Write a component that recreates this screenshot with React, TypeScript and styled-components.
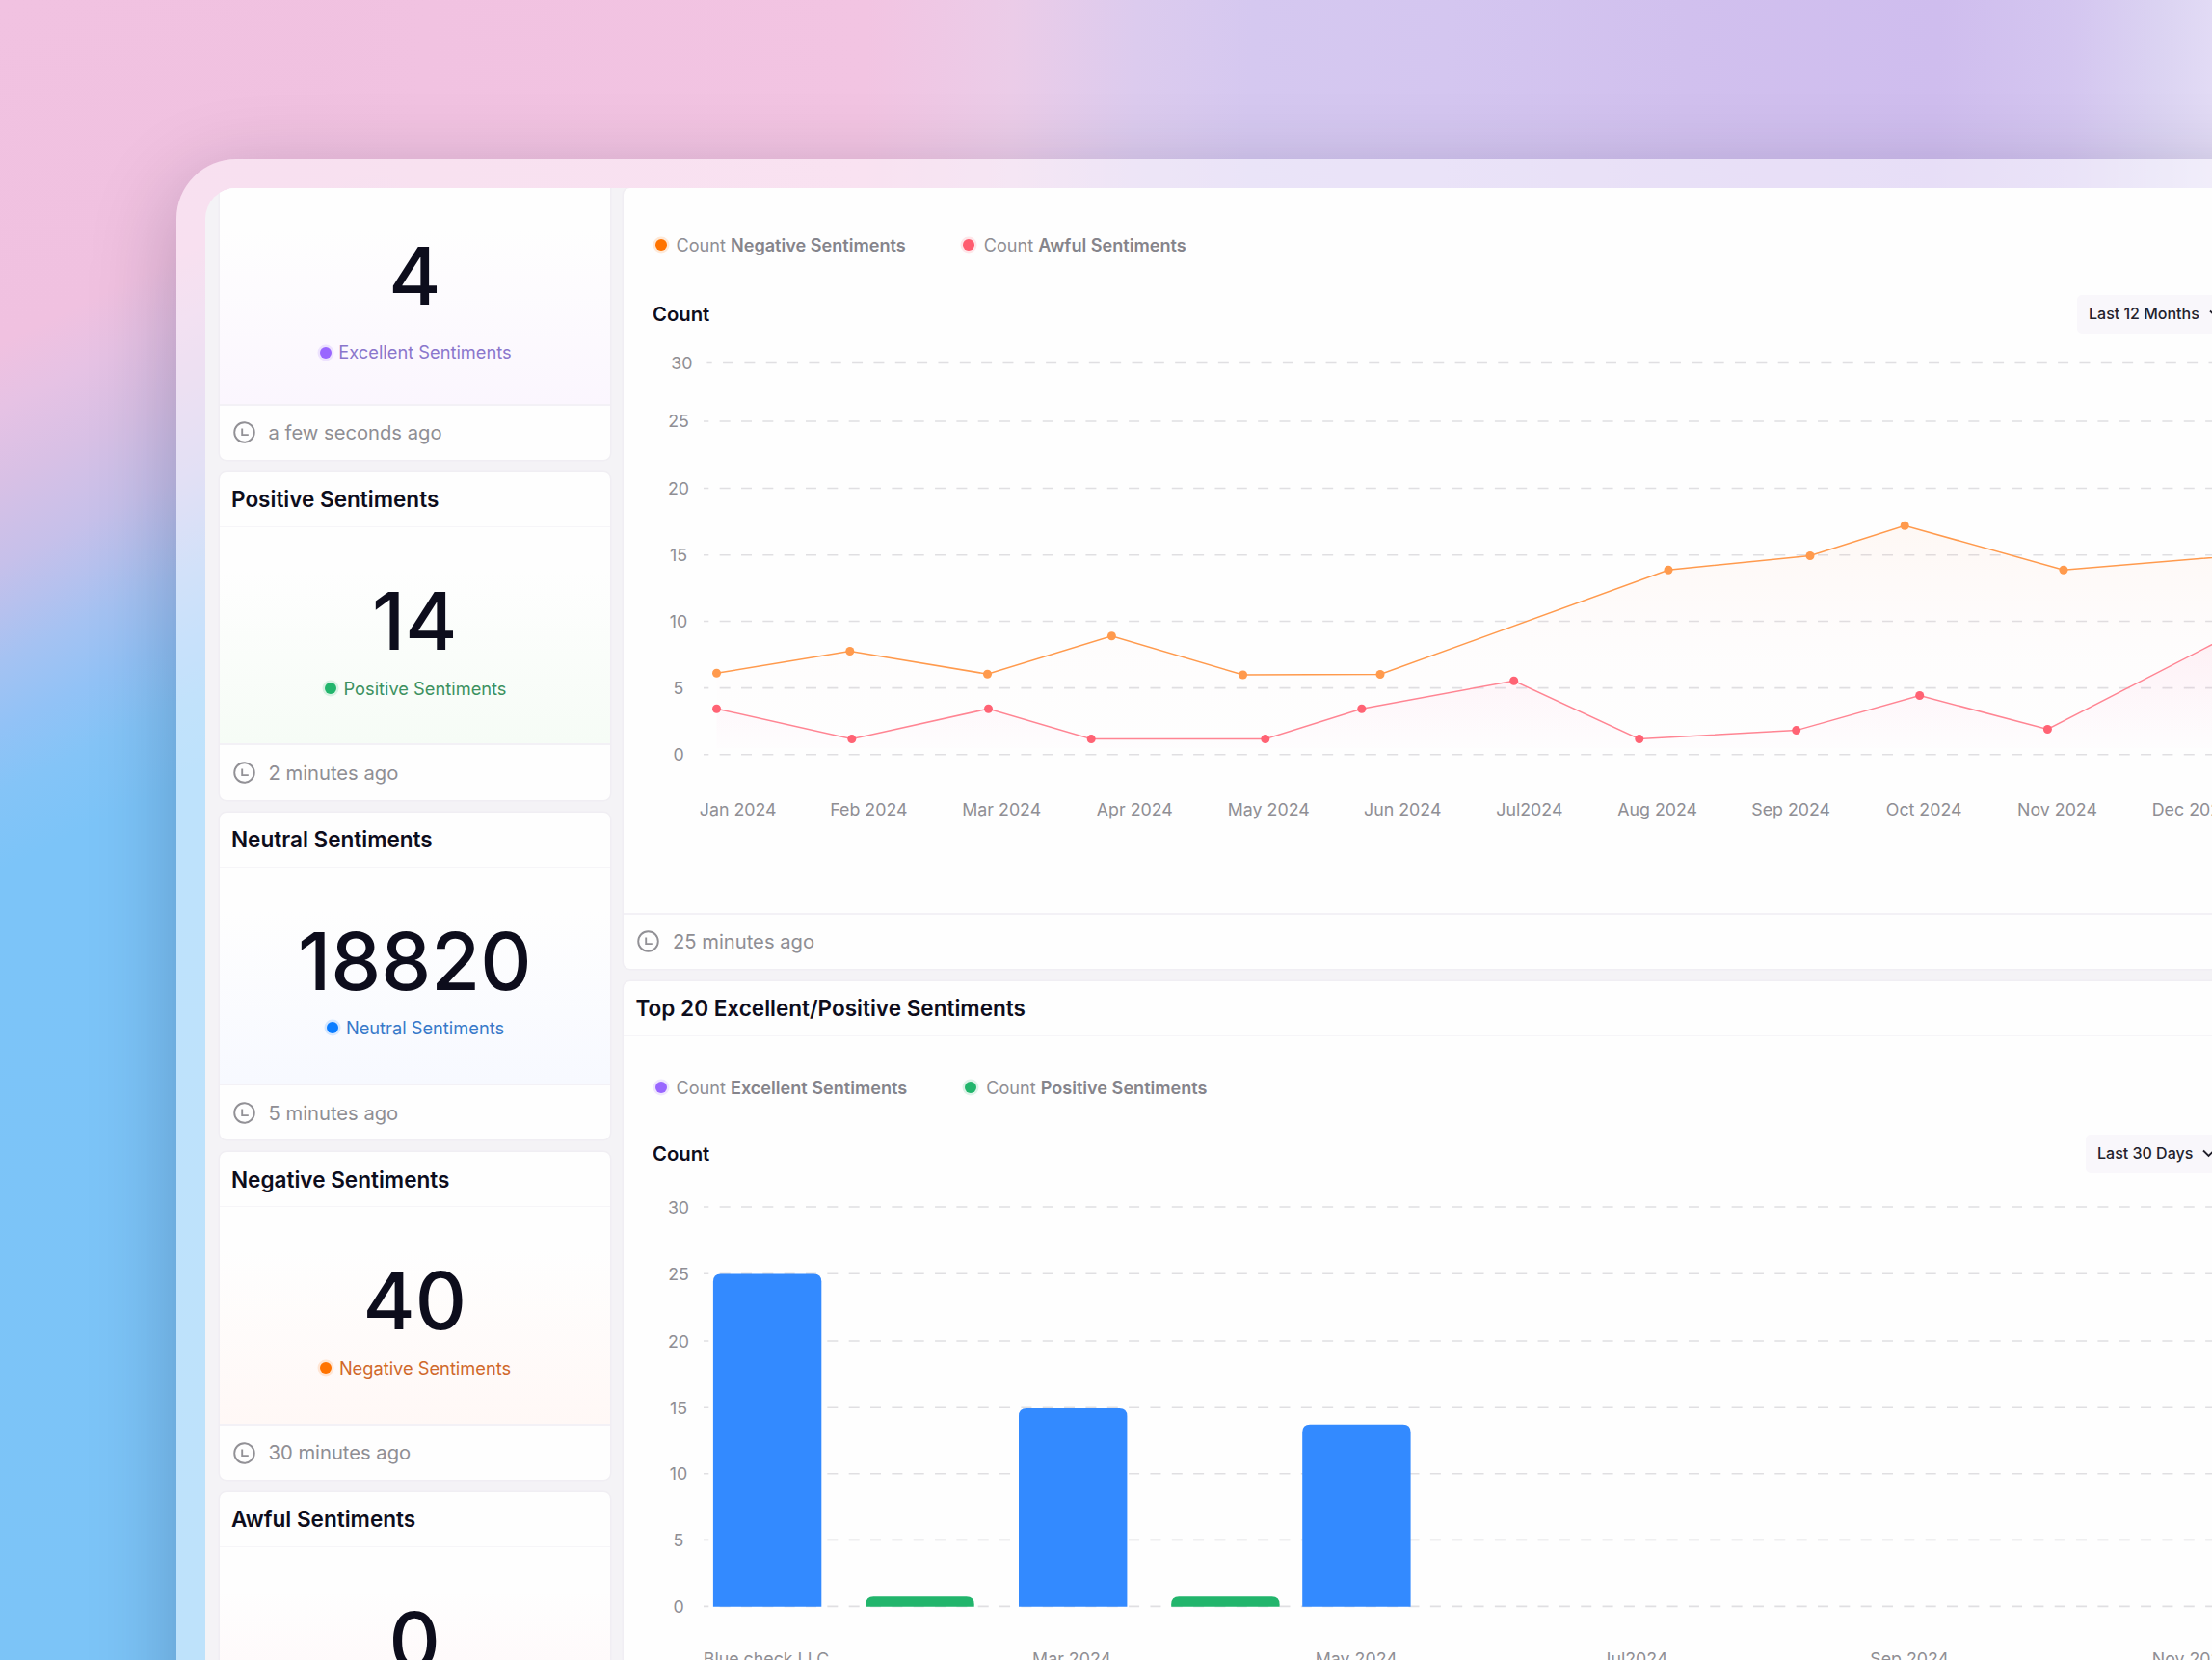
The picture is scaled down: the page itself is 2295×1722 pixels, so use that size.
import React from "react";
import styled, { createGlobalStyle } from "styled-components";

const GlobalStyle = createGlobalStyle`
  *, *::before, *::after { box-sizing: border-box; }
  html, body { margin: 0; padding: 0; overflow: hidden; }
  body {
    font-family: Inter, "Liberation Sans", sans-serif;
    color: #0d0d1c;
    -webkit-font-smoothing: antialiased;
  }
`;

const Page = styled.main`
  width: 2295px;
  height: 1722px;
  padding: 165px 0 0 183px;
  overflow: hidden;
  background:
    linear-gradient(
      91.5deg,
      rgba(241, 194, 225, 0) 290px,
      #f1c2e1 440px,
      #f2c4e2 900px,
      #ebcce8 1050px,
      #dccbee 1180px,
      #d5c8f0 1300px,
      #d4c6f0 1500px,
      #d1c0ee 1750px,
      #cfbdee 2010px,
      #d4c6f0 2150px,
      #dbd3f2 2240px,
      #e4ddf6 2310px
    ),
    linear-gradient(
      154deg,
      #f1c2e1 0,
      #f0c1e0 320px,
      #e6c2e4 380px,
      #d8c0e5 450px,
      #c6c0ea 527px,
      #b6c1ee 572px,
      #a5c2f2 616px,
      #92c2f6 678px,
      #84c4f7 738px,
      #7cc4f8 812px,
      #7cc4f6 2500px
    );
`;

const Frame = styled.div`
  width: 2300px;
  height: 1700px;
  padding: 30px 0 0 30px;
  border-radius: 62px 0 0 0;
  background: rgba(255, 255, 255, 0.5);
  box-shadow: 0 24px 90px rgba(10, 10, 40, 0.23);
`;

const Screen = styled.div`
  display: flex;
  gap: 14px;
  height: 1600px;
  padding-left: 14.5px;
  border-radius: 32px 0 0 0;
  background: #f4f3f6;
  overflow: hidden;
`;

const Sidebar = styled.aside`
  display: flex;
  flex: none;
  flex-direction: column;
  gap: 12.9px;
  width: 405.5px;
  margin-top: -58px;
`;

const Main = styled.section`
  display: flex;
  flex: none;
  flex-direction: column;
  gap: 12.5px;
  width: 1690px;
`;

const Card = styled.article`
  flex: none;
  border-radius: 7px;
  background: #fefefe;
  box-shadow: 0 0 0 1.5px #f0eef3;
  overflow: hidden;
`;

const CardHeader = styled.h2`
  display: flex;
  align-items: center;
  height: 57px;
  margin: 0;
  padding: 1px 0 0 12.5px;
  border-bottom: 1px solid #f6f5f8;
  font-size: 22.55px;
  font-weight: 600;
  line-height: 1;
`;

const CardFooter = styled.footer`
  display: flex;
  align-items: center;
  gap: 14px;
  height: 58.3px;
  padding-left: 14px;
  border-top: 2px solid #f3f1f6;
  color: #8f8e94;
  font-size: 20.2px;
  line-height: 1;

  span {
    padding-top: 1px;
  }
`;

const StatBody = styled.div<{ $tint: string; $top: number; $gap: number }>`
  display: flex;
  flex-direction: column;
  align-items: center;
  gap: ${(p) => p.$gap}px;
  height: 224.6px;
  padding-top: ${(p) => p.$top}px;
  background: linear-gradient(#fefefe 20%, ${(p) => p.$tint});
`;

const StatValue = styled.strong`
  font-size: 82.6px;
  font-weight: 500;
  line-height: 82px;
`;

const StatLabel = styled.span<{ $color: string }>`
  display: flex;
  align-items: center;
  gap: 7.5px;
  height: 28px;
  padding-left: 2px;
  color: ${(p) => p.$color};
  font-size: 18.25px;
  line-height: 1;
`;

const Dot = styled.i<{ $color: string }>`
  flex: none;
  width: 12px;
  height: 12px;
  border-radius: 50%;
  background: ${(p) => p.$color};
  box-shadow: 0 0 0 2.5px ${(p) => p.$color}26;
`;

const ChartBody = styled.div<{ $top: number; $gap: number }>`
  display: flex;
  flex-direction: column;
  padding-top: ${(p) => p.$top}px;

  > div + div {
    margin-top: ${(p) => p.$gap}px;
  }
`;

const Legend = styled.div<{ $gap: number }>`
  display: flex;
  gap: ${(p) => p.$gap}px;
  height: 28px;
  padding-left: 32.7px;
`;

const LegendItem = styled.span`
  display: flex;
  align-items: center;
  gap: 9.8px;
  color: #8f8e94;
  font-size: 18.1px;
  line-height: 1;
  white-space: nowrap;

  b {
    color: #85848b;
    font-weight: 600;
  }
`;

const ChartHead = styled.div`
  display: flex;
  align-items: center;
  justify-content: space-between;
  height: 40px;
  padding: 0 22px 0 30px;
`;

const ChartTitle = styled.h3`
  margin: 0;
  font-size: 20.3px;
  font-weight: 600;
  line-height: 1;
`;

const RangeButton = styled.button<{ $width: number }>`
  display: flex;
  align-items: center;
  gap: 10px;
  width: ${(p) => p.$width}px;
  height: 40px;
  padding: 0 0 1px 12px;
  border: 0;
  border-radius: 5px;
  background: #f9f7fb;
  color: #22212c;
  font: 500 16px/1 Inter, "Liberation Sans", sans-serif;
  white-space: nowrap;
`;

const ChartSvg = styled.svg`
  display: block;
  flex: none;

  text {
    fill: #8f8e94;
    font-size: 17.8px;
  }
`;

const ClockIcon = () => (
  <svg width="23" height="23" viewBox="0 0 23 23" fill="none" stroke="#929196" strokeWidth="1.9">
    <circle cx="11.5" cy="11.5" r="10.3" />
    <path d="M9.2 7.5v6.6h6.6" />
  </svg>
);

const ChevronIcon = () => (
  <svg width="13" height="9" viewBox="0 0 13 9" fill="none" stroke="#22212c" strokeWidth="1.9">
    <path d="M1 1.5l5.5 5.5L12 1.5" />
  </svg>
);

type Stat = {
  title: string;
  value: string;
  dot: string;
  text: string;
  tint: string;
  updated: string;
  top?: number;
  gap?: number;
};

const stats: Stat[] = [
  { title: "Excellent Sentiments", value: "4", dot: "#9966ff", text: "#8a76cc", tint: "#fbf6fe", updated: "a few seconds ago", top: 51, gap: 24.5 },
  { title: "Positive Sentiments", value: "14", dot: "#22b56c", text: "#3c9160", tint: "#f6fcf6", updated: "2 minutes ago" },
  { title: "Neutral Sentiments", value: "18820", dot: "#0b7dff", text: "#3779c9", tint: "#f7f9ff", updated: "5 minutes ago" },
  { title: "Negative Sentiments", value: "40", dot: "#ff7300", text: "#d0682a", tint: "#fff8f6", updated: "30 minutes ago" },
  { title: "Awful Sentiments", value: "0", dot: "#ff5c6f", text: "#d05566", tint: "#fff4f6", updated: "30 minutes ago" },
];

const StatCard = ({ stat }: { stat: Stat }) => (
  <Card>
    <CardHeader>{stat.title}</CardHeader>
    <StatBody $tint={stat.tint} $top={stat.top ?? 56} $gap={stat.gap ?? 14.9}>
      <StatValue>{stat.value}</StatValue>
      <StatLabel $color={stat.text}>
        <Dot $color={stat.dot} />
        {stat.title}
      </StatLabel>
    </StatBody>
    <CardFooter>
      <ClockIcon />
      <span>{stat.updated}</span>
    </CardFooter>
  </Card>
);

const CHART_WIDTH = 1690;

type GridRow = { label: number; y: number; shift?: number };

const Grid = ({ rows }: { rows: GridRow[] }) => (
  <g>
    {rows.map(({ label, y, shift = 0 }) => (
      <React.Fragment key={label}>
        <line
          x1={83 + shift}
          x2={CHART_WIDTH}
          y1={y}
          y2={y}
          stroke="#e0dfe2"
          strokeWidth="1.6"
          strokeDasharray="11 11.34"
          strokeDashoffset="5.7"
        />
        <text x={57 + shift} y={y + 6.5} textAnchor="middle">
          {label}
        </text>
      </React.Fragment>
    ))}
  </g>
);

const AxisLabels = ({ items, y }: { items: [string, number][]; y: number }) => (
  <g>
    {items.map(([label, x]) => (
      <text key={label} x={x + 0.8} y={y}>
        {label}
      </text>
    ))}
  </g>
);

type Point = [number, number];

const negativePoints: Point[] = [
  [96.5, 352.3], [234.8, 329.5], [377.5, 353.2], [506.4, 313.8], [642.6, 354], [785, 353.5],
  [1084, 245.3], [1231, 230.5], [1329.2, 199.2], [1494, 245.3], [1690, 229],
];

const awfulPoints: Point[] = [
  [96.5, 389.2], [236.8, 420.6], [378.5, 389.2], [485.2, 420.6], [665.8, 420.6], [765.8, 389.3],
  [923.7, 360.2], [1053.8, 420.6], [1216.7, 411.6], [1344.7, 375.5], [1477.4, 410.5], [1690, 301],
];

const toPath = (points: Point[]) => points.map(([x, y], i) => `${i ? "L" : "M"}${x} ${y}`).join("");

const Series = ({ points, color, line, fill, base }: { points: Point[]; color: string; line: string; fill: string; base: number }) => (
  <g>
    <path d={`${toPath(points)}V${base}H${points[0][0]}Z`} fill={`url(#${fill})`} />
    <path d={toPath(points)} fill="none" stroke={line} strokeWidth="1.5" />
    {points.map(([x, y]) => (
      <circle key={x} cx={x} cy={y} r="4.5" fill={color} />
    ))}
  </g>
);

const lineGrid: GridRow[] = [
  { label: 30, y: 30.5, shift: 3.4 },
  { label: 25, y: 91 },
  { label: 20, y: 160.5 },
  { label: 15, y: 229.7 },
  { label: 10, y: 298.5 },
  { label: 5, y: 367.6 },
  { label: 0, y: 436.8 },
];

const months: [string, number][] = [
  ["Jan 2024", 78], ["Feb 2024", 213.5], ["Mar 2024", 350.5], ["Apr 2024", 490], ["May 2024", 626],
  ["Jun 2024", 767.3], ["Jul2024", 904.5], ["Aug 2024", 1030.5], ["Sep 2024", 1169.5], ["Oct 2024", 1309],
  ["Nov 2024", 1445.3], ["Dec 2024", 1585],
];

const LineChart = () => (
  <ChartSvg width={CHART_WIDTH} height={600.8} viewBox={`0 0 ${CHART_WIDTH} 600.8`}>
    <defs>
      <linearGradient id="negativeFill" x1="0" x2="0" y1="0" y2="1">
        <stop offset="0" stopColor="#ff7a2b" stopOpacity="0.045" />
        <stop offset="0.6" stopColor="#ff7a7b" stopOpacity="0.01" />
        <stop offset="1" stopColor="#ff7a9b" stopOpacity="0" />
      </linearGradient>
      <linearGradient id="awfulFill" gradientUnits="userSpaceOnUse" x1="0" x2="0" y1="300" y2="430">
        <stop offset="0" stopColor="#ff5c8f" stopOpacity="0.085" />
        <stop offset="1" stopColor="#ff5cbf" stopOpacity="0.008" />
      </linearGradient>
    </defs>
    <Grid rows={lineGrid} />
    <Series points={negativePoints} color="#ff9a4d" line="#ff9a4d" fill="negativeFill" base={430} />
    <Series points={awfulPoints} color="#ff6374" line="#ff8593" fill="awfulFill" base={430} />
    <AxisLabels items={months} y={500} />
  </ChartSvg>
);

const barGrid: GridRow[] = [
  { label: 30, y: 35 },
  { label: 25, y: 104.3 },
  { label: 20, y: 174 },
  { label: 15, y: 243.3 },
  { label: 10, y: 311.7 },
  { label: 5, y: 380.4 },
  { label: 0, y: 449.4 },
];

const BASELINE = 449.8;

const bars = [
  { x: 92.9, top: 104.5, color: "#338aff" },
  { x: 251.3, top: 439.3, color: "#22b56c" },
  { x: 410, top: 244, color: "#338aff" },
  { x: 568.2, top: 439.3, color: "#22b56c" },
  { x: 704.2, top: 260.8, color: "#338aff" },
];

const barPath = (x: number, top: number) =>
  `M${x} ${BASELINE}V${top + 8}q0 -8 8 -8h96.4q8 0 8 8V${BASELINE}z`;

const barLabels: [string, number][] = [
  ["Blue check LLC", 82], ["Mar 2024", 423.3], ["May 2024", 717], ["Jul2024", 1013.5], ["Sep 2024", 1292.5], ["Nov 2024", 1585],
];

const BarChart = () => (
  <ChartSvg width={CHART_WIDTH} height={580} viewBox={`0 0 ${CHART_WIDTH} 580`}>
    <Grid rows={barGrid} />
    {bars.map((bar) => (
      <path key={bar.x} d={barPath(bar.x, bar.top)} fill={bar.color} />
    ))}
    <AxisLabels items={barLabels} y={509.8} />
  </ChartSvg>
);

const LegendEntry = ({ color, name }: { color: string; name: string }) => (
  <LegendItem>
    <Dot $color={color} />
    <span>
      Count <b>{name}</b>
    </span>
  </LegendItem>
);

const Range = ({ label, width }: { label: string; width: number }) => (
  <RangeButton type="button" $width={width}>
    {label}
    <ChevronIcon />
  </RangeButton>
);

export default function App() {
  return (
    <>
      <GlobalStyle />
      <Page>
        <Frame>
          <Screen>
            <Sidebar>
              {stats.map((stat) => (
                <StatCard key={stat.title} stat={stat} />
              ))}
            </Sidebar>
            <Main>
              <Card>
                <ChartBody $top={45.3} $gap={37.7}>
                  <Legend $gap={59.3}>
                    <LegendEntry color="#ff7300" name="Negative Sentiments" />
                    <LegendEntry color="#ff5c6f" name="Awful Sentiments" />
                  </Legend>
                  <ChartHead>
                    <ChartTitle>Count</ChartTitle>
                    <Range label="Last 12 Months" width={160} />
                  </ChartHead>
                  <LineChart />
                </ChartBody>
                <CardFooter>
                  <ClockIcon />
                  <span>25 minutes ago</span>
                </CardFooter>
              </Card>
              <Card>
                <CardHeader>Top 20 Excellent/Positive Sentiments</CardHeader>
                <ChartBody $top={39.6} $gap={34.8}>
                  <Legend $gap={60.3}>
                    <LegendEntry color="#9966ff" name="Excellent Sentiments" />
                    <LegendEntry color="#22b56c" name="Positive Sentiments" />
                  </Legend>
                  <ChartHead>
                    <ChartTitle>Count</ChartTitle>
                    <Range label="Last 30 Days" width={151} />
                  </ChartHead>
                  <BarChart />
                </ChartBody>
              </Card>
            </Main>
          </Screen>
        </Frame>
      </Page>
    </>
  );
}
